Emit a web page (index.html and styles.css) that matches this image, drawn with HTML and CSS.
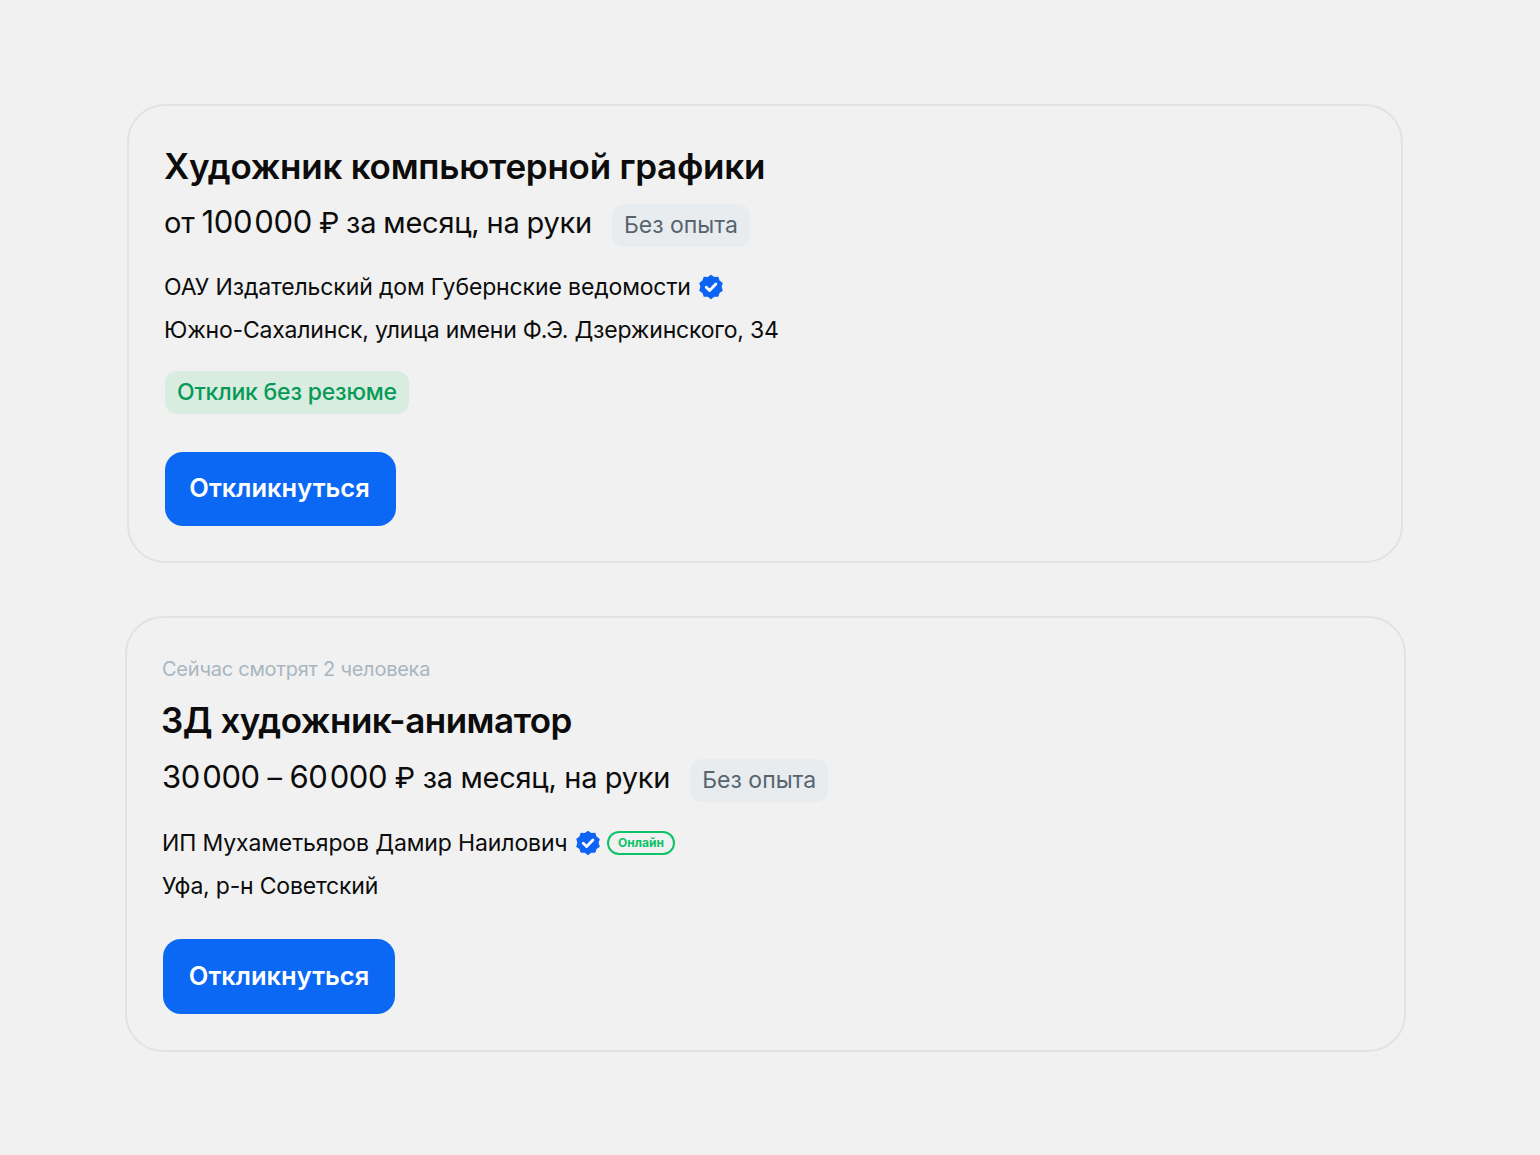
FILE: index.html
```html
<!DOCTYPE html>
<html lang="ru">
<head>
<meta charset="utf-8">
<title>Вакансии</title>
<link rel="stylesheet" href="styles.css">
</head>
<body>
<main class="page">
  <article class="card card-first">
    <h2 class="title">Художник компьютерной графики</h2>
    <div class="salary-row">
      <span class="salary">от <span class="num">100 000</span> ₽ за месяц, на руки</span>
      <span class="exp">Без опыта</span>
    </div>
    <div class="company company-tight">
      <span>ОАУ Издательский дом Губернские ведомости</span>
      <svg class="badge" viewBox="0 0 24 24" aria-hidden="true"><use href="#verified"></use></svg>
    </div>
    <div class="address">Южно-Сахалинск, улица имени Ф.Э. Дзержинского, 34</div>
    <div class="noresume">Отклик без резюме</div>
    <button class="apply apply-first">Откликнуться</button>
  </article>
  <article class="card card-second">
    <div class="watching">Сейчас смотрят 2 человека</div>
    <h2 class="title title-tight">3Д художник-аниматор</h2>
    <div class="salary-row salary-row-second">
      <span class="salary salary-wide"><span class="num">30 000</span> – <span class="num">60 000</span> ₽ за месяц, на руки</span>
      <span class="exp">Без опыта</span>
    </div>
    <div class="company">
      <span>ИП Мухаметьяров Дамир Наилович</span>
      <svg class="badge" viewBox="0 0 24 24" aria-hidden="true"><use href="#verified"></use></svg>
      <span class="online">Онлайн</span>
    </div>
    <div class="address">Уфа, р-н Советский</div>
    <button class="apply apply-second">Откликнуться</button>
  </article>
</main>
<svg class="defs" width="0" height="0" aria-hidden="true">
  <symbol id="verified" viewBox="0 0 24 24">
    <path fill="#0d63f3" d="M12 .6l3 2.2 3.7-.3 1.2 3.5 3 2.2-1.1 3.6 1.1 3.6-3 2.2-1.2 3.5-3.7-.1-3 2.3-3-2.3-3.7.1-1.2-3.5-3-2.2 1.1-3.6L1.1 8.2l3-2.2 1.2-3.5 3.7.3z"/>
    <path fill="none" stroke="#fff" stroke-width="2.6" stroke-linecap="round" stroke-linejoin="round" d="M7.6 12.3l3.1 3 5.8-6"/>
  </symbol>
</svg>
</body>
</html>
```
FILE: styles.css
```css
* { box-sizing: border-box; }
html, body { margin: 0; padding: 0; }
body {
  background: #f1f1f1;
  font-family: Inter, "Noto Sans", sans-serif;
  color: #0c0c0c;
  height: 1155px;
  overflow: hidden;
}
.page { padding-top: 104px; display: flex; flex-direction: column; }
.card {
  border: 2px solid #e0e2e3;
  border-radius: 38px;
  display: flex;
  flex-direction: column;
  align-items: flex-start;
  padding-left: 35px;
}
.card-first { margin-left: 127px; width: 1276px; height: 459px; padding-top: 40px; }
.card-second { margin-left: 125px; width: 1281px; height: 436px; margin-top: 53px; padding-top: 38px; }
.watching { font-size: 20px; line-height: 26px; color: #a9b6c0; letter-spacing: -0.24px; margin-bottom: 18px; }
.title { margin: 0; font-size: 35px; line-height: 40px; font-weight: 600; letter-spacing: -0.25px; }
.title-tight { letter-spacing: -0.5px; margin-left: -1px; }
.salary-row { display: flex; align-items: center; gap: 20px; margin-top: 17px; height: 44px; }
.salary-row-second { margin-top: 18px; }
.salary { font-size: 29px; line-height: 36px; letter-spacing: -0.25px; word-spacing: -0.8px; padding-bottom: 5px; }
.salary-wide { word-spacing: -0.2px; }
.num { font-size: 31px; word-spacing: -6px; letter-spacing: -0.4px; }
.exp { background: #e8ecef; color: #56646f; border-radius: 12px; font-size: 23px; line-height: 43px; padding: 0 12px; }
.company { display: flex; align-items: center; gap: 7px; margin-top: 19px; height: 44px; font-size: 23px; letter-spacing: -0.13px; }
.company-tight { margin-top: 18px; }
.badge { width: 26px; height: 26px; flex: none; }
.online { margin-left: -1px; border: 2px solid #0dc267; color: #0dc267; border-radius: 12px; font-size: 12px; font-weight: 700; line-height: 20px; padding: 0 9.5px; letter-spacing: 0; }
.address { font-size: 23px; line-height: 43px; letter-spacing: -0.2px; }
.noresume { margin-top: 19px; margin-left: 1px; background: #d9ece0; color: #079a56; border-radius: 12px; font-size: 23px; font-weight: 500; letter-spacing: -0.2px; line-height: 43px; padding: 0 12px; }
.apply { margin-top: 38px; width: 231px; height: 74px; border: 0; border-radius: 18px; background: #0a68f5; color: #fff; font-family: inherit; font-size: 25.5px; font-weight: 600; padding: 0 2px 3px 0; }
.apply-first { margin-left: 1px; }
.apply-second { margin-left: 1px; width: 232px; height: 75px; margin-top: 31px; padding: 0 0 2px 0; }
.defs { position: absolute; }
```
